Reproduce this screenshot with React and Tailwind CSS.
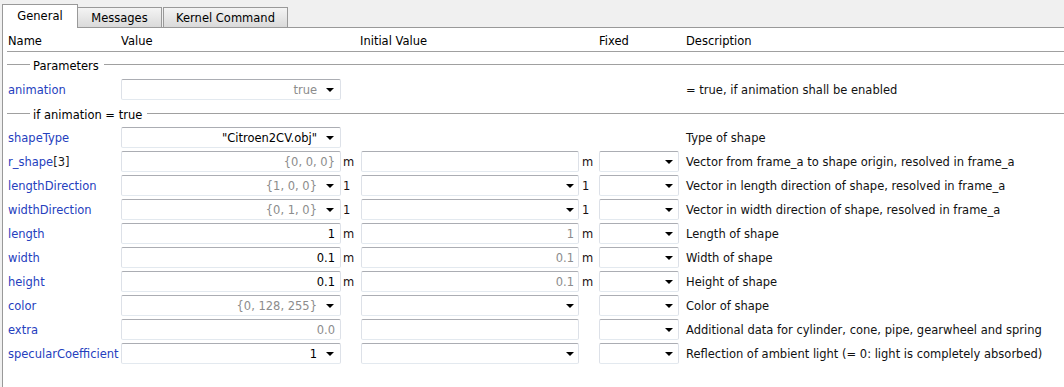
import React from 'react';

const ROWS = [
  { name: 'shapeType', value: '"Citroen2CV.obj"', dark: true, dd: true, fixed: false, initial: false, desc: 'Type of shape' },
  { name: 'r_shape', suffix: '[3]', value: '{0, 0, 0}', unit: 'm', initial: true, iunit: 'm', desc: 'Vector from frame_a to shape origin, resolved in frame_a' },
  { name: 'lengthDirection', value: '{1, 0, 0}', dd: true, unit: '1', initial: true, idd: true, iunit: '1', desc: 'Vector in length direction of shape, resolved in frame_a' },
  { name: 'widthDirection', value: '{0, 1, 0}', dd: true, unit: '1', initial: true, idd: true, iunit: '1', desc: 'Vector in width direction of shape, resolved in frame_a' },
  { name: 'length', value: '1', dark: true, unit: 'm', initial: true, ivalue: '1', iunit: 'm', desc: 'Length of shape' },
  { name: 'width', value: '0.1', dark: true, unit: 'm', initial: true, ivalue: '0.1', iunit: 'm', desc: 'Width of shape' },
  { name: 'height', value: '0.1', dark: true, unit: 'm', initial: true, ivalue: '0.1', iunit: 'm', desc: 'Height of shape' },
  { name: 'color', value: '{0, 128, 255}', dd: true, initial: true, idd: true, desc: 'Color of shape' },
  { name: 'extra', value: '0.0', initial: true, desc: 'Additional data for cylinder, cone, pipe, gearwheel and spring' },
  { name: 'specularCoefficient', value: '1', dark: true, dd: true, initial: true, idd: true, desc: 'Reflection of ambient light (= 0: light is completely absorbed)' },
];

function Arrow() {
  return (
    <svg width="8" height="4" viewBox="0 0 8 4" className="shrink-0">
      <polygon points="0,0 8,0 4,4" fill="#000" />
    </svg>
  );
}

function Field({ value, dark, dd, className = '', pr = 'pr-[5px]' }) {
  return (
    <div
      className={`h-[21px] shrink-0 flex items-center justify-end gap-[9px] rounded-[2px] border border-t-[#abadb3] border-x-[#dde1e8] border-b-[#e3e9ef] bg-white ${pr} ${className}`}
    >
      {value && <span className={`pt-[2px] ${dark ? 'text-[#000]' : 'text-[#8c8c8c]'}`}>{value}</span>}
      {dd && <Arrow />}
    </div>
  );
}

function Group({ label, h }) {
  return (
    <div className={`flex items-center pl-[4px] ${h}`}>
      <div className="w-[23px] h-px bg-[#a0a0a0]" />
      <span className="px-[3px] pt-[5px] text-black">{label}</span>
      <div className="flex-1 h-px bg-[#a0a0a0] ml-[2px]" />
    </div>
  );
}

function Row({ r }) {
  return (
    <div className="flex items-center h-[24px] pt-[2px] pb-[1px] pl-[5px]">
      <div className="w-[113px] shrink-0 pt-[2px] text-[#2540be] whitespace-nowrap">
        {r.name}
        {r.suffix && <span className="text-[#1a1a1a]">{r.suffix}</span>}
      </div>
      <Field value={r.value} dark={r.dark} dd={r.dd} className="w-[220px]" pr={r.dd ? 'pr-[6px]' : 'pr-[5px]'} />
      <div className="w-[20px] shrink-0 pl-[2px] pt-[2px] text-[#1a1010]">{r.unit}</div>
      {r.initial ? (
        <Field value={r.ivalue} dd={r.idd} className="w-[218px]" pr="pr-[4px]" />
      ) : (
        <div className="w-[218px] shrink-0" />
      )}
      <div className="w-[20px] shrink-0 pl-[3px] pt-[2px] text-[#1a1010]">{r.iunit}</div>
      {r.initial ? <Field dd className="w-[80px]" pr="pr-[5px]" /> : <div className="w-[80px] shrink-0" />}
      <div className="ml-[7px] pt-[2px] whitespace-nowrap text-[#111]">{r.desc}</div>
    </div>
  );
}

export default function App() {
  return (
    <div className="w-[1064px] h-[387px] overflow-hidden bg-[#f0f0f0] font-['DejaVu_Sans',sans-serif] text-[11.5px] text-black">
      <div className="flex items-end pt-[4px] pl-[2px] h-[27px]">
        <div className="relative z-10 -mb-px h-[24px] w-[76px] flex items-center justify-center border border-b-0 border-[#999] bg-white">
          General
        </div>
        <div className="h-[20px] w-[84px] flex items-center justify-center border border-b-0 border-l-0 border-[#999] bg-linear-to-b from-[#f4f4f4] to-[#dadada] pt-[2px]">
          Messages
        </div>
        <div className="ml-[1px] h-[20px] w-[125px] flex items-center justify-center border border-b-0 border-[#999] bg-linear-to-b from-[#f4f4f4] to-[#dadada] pt-[2px]">
          Kernel Command
        </div>
      </div>
      <div className="ml-[2px] h-[360px] border-t border-l border-[#999] bg-white">
        <div className="ml-[4px] h-[24px] flex items-center border-b border-[#a0a0a0] pt-[5px]">
          <div className="w-[114px] pl-[1px]">Name</div>
          <div className="w-[239px]">Value</div>
          <div className="w-[239px]">Initial Value</div>
          <div className="w-[87px]">Fixed</div>
          <div>Description</div>
        </div>
        <Group label="Parameters" h="h-[25px]" />
        <Row r={{ name: 'animation', value: 'true', dd: true, desc: '= true, if animation shall be enabled' }} />
        <Group label="if animation = true" h="h-[24px]" />
        {ROWS.map((r) => (
          <Row key={r.name} r={r} />
        ))}
      </div>
    </div>
  );
}
